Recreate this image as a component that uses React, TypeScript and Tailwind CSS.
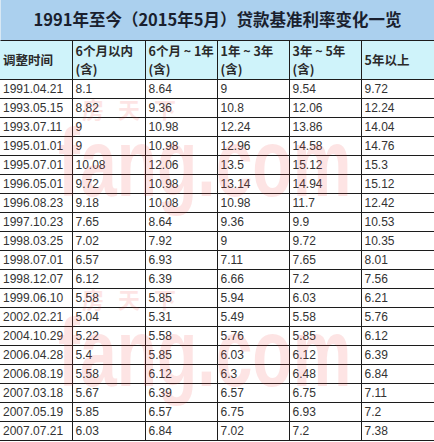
import React from "react";

const headers: string[][] = [
  ["调整时间"],
  ["6个月以内", "(含)"],
  ["6个月 ~ 1年", "(含)"],
  ["1年 ~ 3年", "(含)"],
  ["3年 ~ 5年", "(含)"],
  ["5年以上"],
];

const rows: string[][] = [
  ["1991.04.21", "8.1", "8.64", "9", "9.54", "9.72"],
  ["1993.05.15", "8.82", "9.36", "10.8", "12.06", "12.24"],
  ["1993.07.11", "9", "10.98", "12.24", "13.86", "14.04"],
  ["1995.01.01", "9", "10.98", "12.96", "14.58", "14.76"],
  ["1995.07.01", "10.08", "12.06", "13.5", "15.12", "15.3"],
  ["1996.05.01", "9.72", "10.98", "13.14", "14.94", "15.12"],
  ["1996.08.23", "9.18", "10.08", "10.98", "11.7", "12.42"],
  ["1997.10.23", "7.65", "8.64", "9.36", "9.9", "10.53"],
  ["1998.03.25", "7.02", "7.92", "9", "9.72", "10.35"],
  ["1998.07.01", "6.57", "6.93", "7.11", "7.65", "8.01"],
  ["1998.12.07", "6.12", "6.39", "6.66", "7.2", "7.56"],
  ["1999.06.10", "5.58", "5.85", "5.94", "6.03", "6.21"],
  ["2002.02.21", "5.04", "5.31", "5.49", "5.58", "5.76"],
  ["2004.10.29", "5.22", "5.58", "5.76", "5.85", "6.12"],
  ["2006.04.28", "5.4", "5.85", "6.03", "6.12", "6.39"],
  ["2006.08.19", "5.58", "6.12", "6.3", "6.48", "6.84"],
  ["2007.03.18", "5.67", "6.39", "6.57", "6.75", "7.11"],
  ["2007.05.19", "5.85", "6.57", "6.75", "6.93", "7.2"],
  ["2007.07.21", "6.03", "6.84", "7.02", "7.2", "7.38"],
];

const widths = ["w-[72px]", "w-[73px]", "w-[72px]", "w-[72px]", "w-[72px]", "w-[73px]"];

const cjk = "font-['Microsoft_YaHei','Noto_Sans_CJK_SC',sans-serif]";

// faint site watermark laid over the table
function Watermark({ top }: { top: string }) {
  return (
    <div className={`pointer-events-none absolute left-[58px] ${top} select-none opacity-[0.13]`}>
      <div className={`ml-[24px] text-[22px] font-bold tracking-[14px] text-[#f03a3a] ${cjk}`}>房天下</div>
      <div className="-mt-[10px] origin-top-left scale-y-[1.45] font-['Liberation_Sans',sans-serif] text-[66px] font-bold leading-none text-[#f03a3a]">
        fang.com
      </div>
    </div>
  );
}

export default function App() {
  return (
    <div className="relative h-[442px] w-[434px] overflow-hidden bg-white">
      <div className="w-[434px]">
        <div className={`flex h-[41px] items-center justify-center border-b border-l border-[#1c1c1c] border-l-[#d8e8f4] bg-[#abd0ee] pb-[2px] text-[16.5px] font-bold text-[#1a1f2e] ${cjk}`}>
          1991年至今（2015年5月）贷款基准利率变化一览
        </div>
        <table className="w-[434px] table-fixed border-collapse">
          <thead>
            <tr className="h-[38px] bg-[#cff3fa]">
              {headers.map((h, i) => (
                <th
                  key={i}
                  className={`${widths[i]} border-r border-b border-[#1c1c1c] px-[3px] text-left align-middle text-[12.5px] font-bold leading-[18px] text-[#2a2a2a] ${cjk}`}
                >
                  {h.map((line, j) => (
                    <div key={j} className="whitespace-nowrap">{line}</div>
                  ))}
                </th>
              ))}
            </tr>
          </thead>
          <tbody>
            {rows.map((r, i) => (
              <tr key={i} className="h-[19px]">
                {r.map((c, j) => (
                  <td
                    key={j}
                    className="border-r border-b border-[#1c1c1c] px-[3px] py-0 font-['Liberation_Sans',Arial,sans-serif] text-[12px] leading-[18px] text-[#333]"
                  >
                    {c}
                  </td>
                ))}
              </tr>
            ))}
          </tbody>
        </table>
      </div>
      <Watermark top="top-[92px]" />
      <Watermark top="top-[282px]" />
    </div>
  );
}
